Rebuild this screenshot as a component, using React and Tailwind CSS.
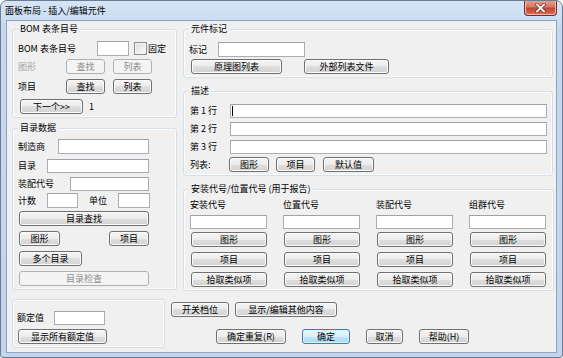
import React from "react";

function Btn({ w, children, disabled, def, className = "" }) {
  const skin = disabled
    ? "border-[#adb2b5] bg-[#f4f4f4] text-[#8b8b8b]"
    : def
    ? "border-[#3c7fb1] bg-[linear-gradient(#eaf6fd,#d9f0fc_50%,#bee6fd_50%,#a7d9f5)] shadow-[inset_0_0_0_1px_#dff3fd] text-black"
    : "border-[#707070] bg-[linear-gradient(#f4f4f4,#ececec_50%,#dfdfdf_50%,#d2d2d2)] shadow-[inset_0_0_0_1px_#fbfbfb] text-black";
  return (
    <div
      className={`flex items-center justify-center h-[15px] shrink-0 rounded-[3px] border text-[9px] leading-[11px] whitespace-nowrap ${skin} ${w} ${className}`}
    >
      {children}
    </div>
  );
}

function Input({ w, h = "h-[15px]", className = "" }) {
  return (
    <div
      className={`shrink-0 bg-white border border-[#abadb3] border-t-[#9ea1a8] ${w} ${h} ${className}`}
    />
  );
}

function Group({ title, h, w, className = "", children }) {
  return (
    <div
      className={`relative box-border border border-[#d5dfe5] rounded-[3px] shadow-[inset_0_0_0_1px_#fafcfd] ${h} ${w} ${className}`}
    >
      {title && (
        <div className="absolute left-[5px] top-[-7px] px-[2px] leading-[12px] text-[9px] bg-[#f0f0f0] whitespace-nowrap">
          {title}
        </div>
      )}
      {children}
    </div>
  );
}

function Row({ className = "", h = "h-[15px]", children }) {
  return <div className={`flex items-center ${h} ${className}`}>{children}</div>;
}

function Label({ w, children, className = "" }) {
  return (
    <div className={`shrink-0 text-[9px] leading-[12px] whitespace-nowrap ${w} ${className}`}>
      {children}
    </div>
  );
}

export default function App() {
  return (
    <div className="w-[563px] h-[358px] relative box-border border border-[#6b7c94] rounded-t-[7px] rounded-b-[3px] overflow-hidden bg-[linear-gradient(180deg,#d6e5f5,#c4d8ee_30px,#c2d5ec)] font-['Noto_Sans_CJK_SC','Liberation_Sans',sans-serif] text-black">
      {/* title bar */}
      <div className="h-[19px] flex items-center pl-[4px] text-[9px] leading-[12px]">
        面板布局 - 插入/编辑元件
      </div>
      {/* close button */}
      <div className="absolute top-[-1px] right-[5px] w-[33px] h-[16px] rounded-b-[4px] border border-[#6e2f28] border-t-0 bg-[linear-gradient(#eaa698,#d77563_45%,#c3452f_55%,#d5735d)] shadow-[inset_0_0_0_1px_#f0b9ad] flex items-center justify-center">
        <svg width="11" height="10" viewBox="0 0 11 10">
          <path d="M2 1.5 L9 8.5 M9 1.5 L2 8.5" stroke="#7a2a20" strokeWidth="3.2" strokeLinecap="square" />
          <path d="M2 1.5 L9 8.5 M9 1.5 L2 8.5" stroke="#ffffff" strokeWidth="1.8" strokeLinecap="square" />
        </svg>
      </div>

      {/* client area */}
      <div className="mx-[5px] h-[333px] box-border border border-[#8da3bf] bg-[#f0f0f0]">
        {/* top area */}
        <div className="flex pl-[5px] pt-[8px] gap-[6px] h-[270px]">
          {/* left column */}
          <div className="flex flex-col w-[165px]">
            <Group title="BOM 表条目号" h="h-[89px]" w="w-[165px]">
              <Row className="mt-[11px] pl-[5px]">
                <Label w="w-[79px]">BOM 表条目号</Label>
                <Input w="w-[32px]" />
                <div className="ml-[5px] w-[13px] h-[13px] border border-[#8e8f8f] bg-[linear-gradient(135deg,#dcdcdc,#fbfbfb)] shadow-[inset_0_0_0_1px_#f4f4f4]" />
                <Label w="" className="ml-[1px]">固定</Label>
              </Row>
              <Row className="mt-[3px] pl-[5px]">
                <Label w="w-[48px]" className="text-[#a3a3a3]">图形</Label>
                <Btn w="w-[39px]" disabled>查找</Btn>
                <Btn w="w-[39px]" disabled className="ml-[8px]">列表</Btn>
              </Row>
              <Row className="mt-[5px] pl-[5px]">
                <Label w="w-[48px]">项目</Label>
                <Btn w="w-[39px]">查找</Btn>
                <Btn w="w-[39px]" className="ml-[8px]">列表</Btn>
              </Row>
              <Row className="mt-[5px] pl-[5px]">
                <Btn w="w-[63px]" className="ml-[2px]">下一个&gt;&gt;</Btn>
                <Label w="" className="ml-[6px]">1</Label>
              </Row>
            </Group>

            <Group title="目录数据" h="h-[162px]" w="w-[165px]" className="mt-[10px]">
              <Row className="mt-[10px] pl-[5px]">
                <Label w="w-[40px]">制造商</Label>
                <Input w="w-[91px]" />
              </Row>
              <Row className="mt-[4px] pl-[5px]">
                <Label w="w-[29px]">目录</Label>
                <Input w="w-[102px]" h="h-[14px]" />
              </Row>
              <Row className="mt-[3px] pl-[5px]">
                <Label w="w-[52px]">装配代号</Label>
                <Input w="w-[79px]" h="h-[14px]" />
              </Row>
              <Row className="mt-[2px] pl-[5px]">
                <Label w="w-[29px]">计数</Label>
                <Input w="w-[31px]" />
                <Label w="w-[29px]" className="ml-[11px]">单位</Label>
                <Input w="w-[32px]" />
              </Row>
              <Row className="mt-[3px] pl-[6px]">
                <Btn w="w-[130px]">目录查找</Btn>
              </Row>
              <Row className="mt-[5px] pl-[6px]">
                <Btn w="w-[41px]">图形</Btn>
                <Btn w="w-[40px]" className="ml-[49px]">项目</Btn>
              </Row>
              <Row className="mt-[5px] pl-[6px]">
                <Btn w="w-[63px]">多个目录</Btn>
              </Row>
              <Row className="mt-[5px] pl-[6px]">
                <Btn w="w-[130px]" disabled>目录检查</Btn>
              </Row>
            </Group>
          </div>

          {/* right column */}
          <div className="flex flex-col w-[371px]">
            <Group title="元件标记" h="h-[49px]" w="w-[370px]">
              <Row className="mt-[12px] pl-[5px]">
                <Label w="w-[29px]">标记</Label>
                <Input w="w-[87px]" />
              </Row>
              <Row className="mt-[2px] pl-[7px]">
                <Btn w="w-[91px]">原理图列表</Btn>
                <Btn w="w-[85px]" className="ml-[22px]">外部列表文件</Btn>
              </Row>
            </Group>

            <Group title="描述" h="h-[85px]" w="w-[370px]" className="mt-[13px]">
              <Row h="h-[14px]" className="mt-[12px] pl-[6px]">
                <Label w="w-[40px]">第 1 行</Label>
                <div className="shrink-0 w-[317px] h-[14px] bg-white border border-[#abadb3] border-t-[#9ea1a8] flex items-center pl-[1px]">
                  <div className="w-[1px] h-[10px] bg-black" />
                </div>
              </Row>
              <Row h="h-[14px]" className="mt-[4px] pl-[6px]">
                <Label w="w-[40px]">第 2 行</Label>
                <Input w="w-[317px]" h="h-[14px]" />
              </Row>
              <Row h="h-[14px]" className="mt-[4px] pl-[6px]">
                <Label w="w-[40px]">第 3 行</Label>
                <Input w="w-[317px]" h="h-[14px]" />
              </Row>
              <Row className="mt-[3px] pl-[6px]">
                <Label w="w-[39px]">列表:</Label>
                <Btn w="w-[40px]">图形</Btn>
                <Btn w="w-[39px]" className="ml-[7px]">项目</Btn>
                <Btn w="w-[51px]" className="ml-[8px]">默认值</Btn>
              </Row>
            </Group>

            <Group title="安装代号/位置代号 (用于报告)" h="h-[102px]" w="w-[371px]" className="mt-[13px]">
              <div className="flex pl-[6px] gap-[16px]">
                {["安装代号", "位置代号", "装配代号", "组群代号"].map((t) => (
                  <div key={t} className="flex flex-col w-[77px]">
                    <Row h="h-[14px]" className="mt-[8px]">
                      <Label w="">{t}</Label>
                    </Row>
                    <Input w="w-[77px]" h="h-[14px]" className="mt-[3px]" />
                    <Btn w="w-[76px]" className="mt-[3px] ml-[1px]">图形</Btn>
                    <Btn w="w-[76px]" className="mt-[5px] ml-[1px]">项目</Btn>
                    <Btn w="w-[76px]" className="mt-[5px] ml-[1px]">拾取类似项</Btn>
                  </div>
                ))}
              </div>
            </Group>
          </div>
        </div>

        {/* bottom area */}
        <div className="flex pl-[5px] gap-[6px]">
          <Group h="h-[49px]" w="w-[153px]" className="mt-[8px]">
            <Row h="h-[14px]" className="mt-[11px] pl-[4px]">
              <Label w="w-[37px]">额定值</Label>
              <Input w="w-[51px]" h="h-[14px]" />
            </Row>
            <Row className="mt-[4px] pl-[5px]">
              <Btn w="w-[89px]">显示所有额定值</Btn>
            </Row>
          </Group>
          <div className="flex flex-col">
            <div className="flex mt-[11px] gap-[6px]">
              <Btn w="w-[58px]" className="h-[14px]">开关档位</Btn>
              <Btn w="w-[102px]" className="h-[14px]">显示/编辑其他内容</Btn>
            </div>
            <div className="flex mt-[12px] ml-[45px] gap-[16px]">
              <Btn w="w-[70px]">确定重复(R)</Btn>
              <Btn w="w-[48px]" def>确定</Btn>
              <Btn w="w-[37px]">取消</Btn>
              <Btn w="w-[50px]">帮助(H)</Btn>
            </div>
          </div>
        </div>
      </div>
    </div>
  );
}
